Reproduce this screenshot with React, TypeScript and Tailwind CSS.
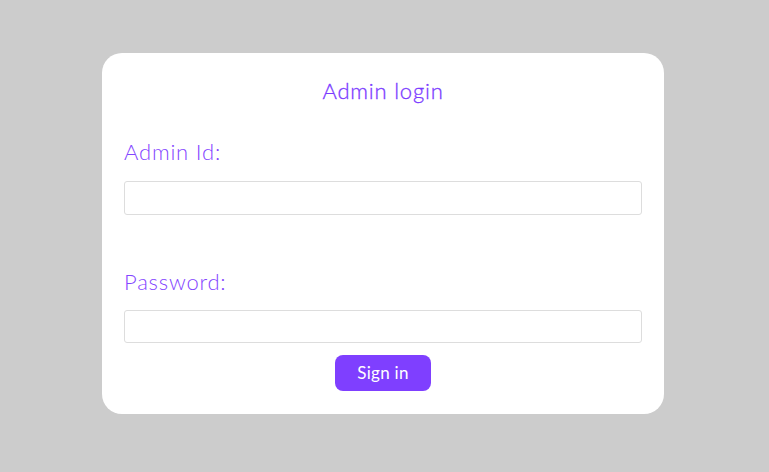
import React from 'react';

const App: React.FC = () => {
  return (
    <div className="w-[769px] h-[472px] bg-[#cccccc] pl-[102px] pt-[53px] font-['Lato','Noto_Sans',sans-serif]">
      <div className="w-[562px] h-[361px] bg-white rounded-[20px] px-[22px] pt-[24px] flex flex-col">
        {/* Title */}
        <h1 className="text-center text-[22px] leading-[28px] tracking-[0.8px] text-[#7b3bff] font-light [-webkit-text-stroke:0.3px_#7b3bff]">Admin login</h1>

        <label className="mt-[33px] text-[22px] leading-[28px] tracking-[0.8px] text-[#8446ff] font-light">Admin Id:</label>
        <input
          type="text"
          className="mt-[15px] h-[34px] w-full border border-[#dddddd] rounded-[3px] outline-none px-2"
        />

        <label className="mt-[53px] text-[22px] leading-[28px] tracking-[0.8px] text-[#8446ff] font-light">Password:</label>
        <input
          type="password"
          className="mt-[14px] h-[33px] w-full border border-[#dddddd] rounded-[3px] outline-none px-2"
        />

        <div className="flex justify-center mt-[12px]">
          <button className="w-[96px] h-[36px] bg-[#7f3fff] text-white text-[17px] tracking-[0.3px] rounded-[8px]">
            Sign in
          </button>
        </div>
      </div>
    </div>
  );
};

export default App;
